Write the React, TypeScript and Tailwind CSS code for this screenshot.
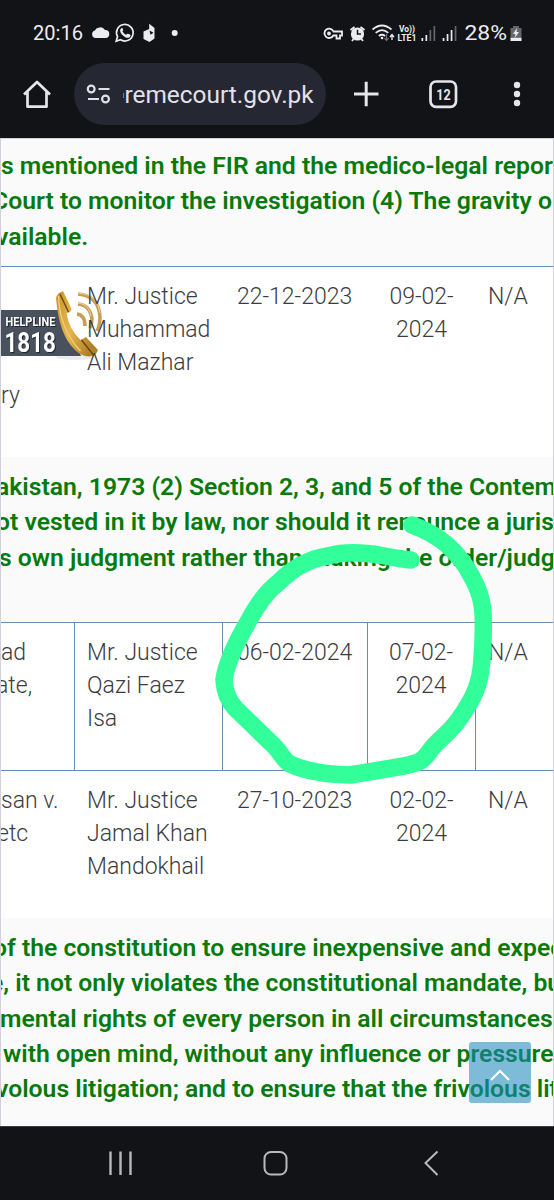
import type { ReactNode } from 'react';

type Line = { text: string; shift: string };

function Summary({ lines, className }: { lines: Line[]; className: string }) {
  return (
    <div className={`overflow-hidden whitespace-pre bg-[#fbfafb] text-[24.73px] leading-[35.25px] font-semibold text-[#087a0c] ${className}`}>
      {lines.map((l) => (
        <div key={l.text} className={l.shift}>{l.text}</div>
      ))}
    </div>
  );
}

type RowProps = {
  party: ReactNode;
  judge: ReactNode;
  heard: string;
  uploaded: ReactNode;
  className: string;
  cell?: string;
};

function Row({ party, judge, heard, uploaded, className, cell = '' }: RowProps) {
  return (
    <div className={`grid grid-cols-[75px_148px_145px_108px_78px] whitespace-pre text-[23px] leading-[33px] font-light text-[#3c3c3e] ${className}`}>
      <div className={`overflow-hidden pt-[13px] ${cell}`}>{party}</div>
      <div className={`pt-[13px] pl-[12px] ${cell}`}>{judge}</div>
      <div className={`pt-[13px] pl-[14px] ${cell}`}>{heard}</div>
      <div className={`pt-[13px] pr-px text-center ${cell}`}>{uploaded}</div>
      <div className="pt-[13px] pl-[12px]">N/A</div>
    </div>
  );
}

function StatusBar() {
  return (
    <svg className="block h-[63px] w-full" viewBox="0 0 554 63" fill="#ececf0" fontFamily="Roboto, sans-serif">
      <text x="33" y="40" fontSize="21" textLength="50" lengthAdjust="spacingAndGlyphs">20:16</text>
      <path d="M95.500 38a3.900 3.900 0 0 1-.6-7.600 5 5 0 0 1 3.600-2.600 5.500 5.500 0 0 1 6.500 2.200 4 4 0 0 1 .5 8z" />
      <path d="M116.200 41.200l1.300-4.600a8.300 8.300 0 1 1 3 3.200z" fill="none" stroke="#ececf0" strokeWidth="1.700" />
      <path d="M121.500 28.300c-2.300 1.300-1.500 4.300 1.200 6.900 2.800 2.700 5.900 3.700 7.500 1.200.6-1.100.4-1.400-.3-1.800l-1.900-.9c-.5-.2-.8 0-1.700 1.100-1.900-.7-3.100-1.900-3.900-3.500.8-.9.900-1.200.7-1.700l-.9-1.800z" />
      <path d="M149.200 23.700l5.300 4.300v10.500l-5 3.500-6-3v-7.500l5.700-2.500z" />
      <path d="M149.500 30.500l4 2.300-3 2z" fill="#121317" />
      <circle cx="174.700" cy="33" r="3" />
      <g fill="none" stroke="#ececf0" strokeWidth="1.800">
        <path d="M333.500 31.500h8.500v4h-2v3h-3.500v-3h-3.200a4.700 4.700 0 1 1 .2-4z" />
        <circle cx="329" cy="33.500" r="1" />
      </g>
      <circle cx="357.500" cy="34" r="6.600" />
      <path d="M350.500 30l4-3M364.500 30l-4-3M353.500 39l-1.500 2M361.500 39l1.500 2" stroke="#ececf0" strokeWidth="1.800" />
      <path d="M357.500 29.800v4.300h3.500" fill="none" stroke="#121317" strokeWidth="1.500" />
      <g fill="none" stroke="#ececf0" strokeWidth="1.700">
        <path d="M372.500 29.500q9.500-8 19 0M375.700 32.800q6.300-5.500 12.600 0M378.900 36q3-2.500 6.200 0" />
        <path d="M386.500 34v6m-2-2l2 2.500 2-2.500" stroke="#707178" strokeWidth="1.200" />
        <path d="M392 40v-5m-2 2l2-2.500 2 2.500" strokeWidth="1.300" />
      </g>
      <circle cx="382" cy="38" r="1.300" />
      <text x="399" y="32" fontSize="9" fontWeight="700" textLength="16" lengthAdjust="spacingAndGlyphs">Vo))</text>
      <text x="397.500" y="41" fontSize="9.500" fontWeight="700" textLength="19" lengthAdjust="spacingAndGlyphs">LTE1</text>
      <path d="M421.500 38h1.700v3h-1.700zM425.500 35h1.700v6h-1.700zM442.700 38h1.700v3h-1.700zM446.700 34h1.700v7h-1.700zM450.700 30h1.700v11h-1.700z" />
      <path d="M429.500 30h1.700v11h-1.700zM433.500 26h1.700v15h-1.700zM454.700 26h1.700v15h-1.700z" fill="#65666c" />
      <text x="464.500" y="40" fontSize="21" textLength="42.500" lengthAdjust="spacingAndGlyphs">28%</text>
      <path d="M513 26h6v2h2.500v9h-11v-9h2.500z" fill="#65666c" />
      <path d="M510.500 37.500h11v3.500h-11z" />
      <path d="M517 28l-4 6h2.500l-.8 4 4.300-6h-2.500z" />
    </svg>
  );
}

function Toolbar() {
  return (
    <div className="flex h-[75px] items-start">
      <svg className="h-[62px] w-[74px]" viewBox="0 0 74 62" fill="none" stroke="#e6e5ea" strokeWidth="2.700">
        <path d="M24 31.500L37 19l13 12.500M27.500 29v14.700h19V29" strokeLinejoin="round" />
      </svg>
      <div className="flex h-[62px] w-[252px] items-center overflow-hidden rounded-full bg-[#252732]">
        <svg className="ml-[12px] h-[22px] w-[26px] shrink-0" viewBox="0 0 26 22" fill="none" stroke="#e0dfe8" strokeWidth="2.200">
          <circle cx="5.200" cy="6" r="3.400" /><path d="M12.500 6h11M2 16h11" /><circle cx="19.500" cy="16" r="3.400" />
        </svg>
        <div className="mt-[3px] ml-[11px] h-[5px] w-px bg-[#777984]" />
        <div className="ml-[0.5px] pt-[2px] text-[24.4px] text-[#e3e1ea]">remecourt.gov.pk</div>
      </div>
      <svg className="h-[62px] w-[228px]" viewBox="0 0 228 62" fill="none" stroke="#e6e5ea" strokeWidth="3">
        <path d="M28 31h24.500M40.200 18.700v24.500" />
        <rect x="104.500" y="18.500" width="25.500" height="25.300" rx="5.500" strokeWidth="2.700" />
        <text x="110.300" y="36.500" fontSize="15.500" fontWeight="700" textLength="14.500" lengthAdjust="spacingAndGlyphs" stroke="none" fill="#e6e5ea" fontFamily="Roboto, sans-serif">12</text>
        <g fill="#e6e5ea" stroke="none"><circle cx="191" cy="22" r="3.200" /><circle cx="191" cy="31" r="3.200" /><circle cx="191" cy="40" r="3.200" /></g>
      </svg>
    </div>
  );
}

function Helpline() {
  return (
    <svg className="absolute top-[147px] left-0 h-[80px] w-[106px]" viewBox="0 285 106 80">
      <defs>
        <linearGradient id="gold" x1="0" y1="0" x2="1" y2="0.500">
          <stop offset="0" stopColor="#c99428" /><stop offset="0.500" stopColor="#e6b751" /><stop offset="1" stopColor="#b08226" />
        </linearGradient>
      </defs>
      <ellipse cx="76" cy="357" rx="20" ry="3" fill="#ececed" />
      <path d="M0 310h61l20 46H0z" fill="#49515f" />
      <g className="drop-shadow-[1px_1px_0_#20252e]" fill="#fff" fontFamily="Roboto, sans-serif" fontWeight="700">
        <text x="5.500" y="325.700" fontSize="13.500" textLength="50" lengthAdjust="spacingAndGlyphs">HELPLINE</text>
        <text x="4.500" y="351.500" fontSize="27.500" textLength="51.500" lengthAdjust="spacingAndGlyphs">1818</text>
      </g>
      <path d="M56 298Q57 293 63 291L71.500 309Q71 313 66.500 313Q69 329 80.500 340L86 337L98 350Q96 356 89 356.500Q81 356 75 350Q59 335 56 298Z" fill="url(#gold)" />
      <path d="M60 294l8.500 18M81.500 340l12 15" stroke="#684811" strokeWidth="1.400" fill="none" />
      <path d="M58.500 296q1 33 22 55" stroke="#f2cf7c" strokeWidth="1.300" fill="none" />
      <g fill="none" stroke="#c69d52" strokeWidth="3.500">
        <path d="M78 294q21 2 22 23 0 8-3 14M78 304q12 1 14 15 0 4-2 9M77 314q8 1 8 12" />
      </g>
      <path d="M78 293q20 1 22 20M78 303q11 1 13 13" fill="none" stroke="#ecd7a5" strokeWidth="1" />
    </svg>
  );
}

export default function App() {
  return (
    <div className="h-[1200px] w-[554px] overflow-hidden bg-[#121317] font-['Roboto',sans-serif]">
      <StatusBar />
      <Toolbar />
      <main className="relative h-[988px] overflow-hidden bg-white">
        <Helpline />
        <Summary
          className="h-[129px] border-b border-[#6c8cae] pt-[10px]"
          lines={[
            { text: 's mentioned in the FIR and the medico-legal repor', shift: 'ml-px' },
            { text: 'Court to monitor the investigation (4) The gravity o', shift: '-ml-[8px]' },
            { text: 'vailable.', shift: '-ml-[4px]' },
          ]}
        />
        <Row
          className="relative h-[190px]"
          party={<div className="pt-[99px] pl-px">ry</div>}
          judge={<>Mr. Justice<br />Muhammad<br />Ali Mazhar</>}
          heard="22-12-2023"
          uploaded={<>09-02-<br />2024</>}
        />
        <Summary
          className="h-[166px] border-b border-[#6c8cae] pt-[12px]"
          lines={[
            { text: 'akistan, 1973 (2) Section 2, 3, and 5 of the Contem', shift: '-ml-[4px]' },
            { text: 'ot vested in it by law, nor should it renounce a juris', shift: '-ml-[4px]' },
            { text: 's own judgment rather than making the order/judg', shift: '-ml-px' },
          ]}
        />
        <Row
          className="h-[148px] border-b border-[#6c8cae]"
          cell="border-r border-[#6c8cae]"
          party={<><div className="pl-px">ad</div><div className="-ml-[4px]">ate,</div></>}
          judge={<>Mr. Justice<br />Qazi Faez<br />Isa</>}
          heard="06-02-2024"
          uploaded={<>07-02-<br />2024</>}
        />
        <Row
          className="h-[147px]"
          party={<><div className="pl-px">san v.</div><div className="-ml-[3px]">etc</div></>}
          judge={<>Mr. Justice<br />Jamal Khan<br />Mandokhail</>}
          heard="27-10-2023"
          uploaded={<>02-02-<br />2024</>}
        />
        <Summary
          className="h-[208px] pt-[12px]"
          lines={[
            { text: 'of the constitution to ensure inexpensive and expec', shift: '-ml-[7px]' },
            { text: 'e, it not only violates the constitutional mandate, bu', shift: '-ml-[10px]' },
            { text: 'mental rights of every person in all circumstances', shift: 'ml-0' },
            { text: 'with open mind, without any influence or pressure', shift: 'ml-[3px]' },
            { text: 'volous litigation; and to ensure that the frivolous lit', shift: '-ml-[4px]' },
          ]}
        />
        <div className="absolute inset-0 border-x border-t border-[#d2d1d9]" />
        <svg className="absolute top-[372px] left-[200px] h-[280px] w-[300px]" viewBox="200 510 300 280" fill="none" stroke="#33ff9a" strokeWidth="17.500" strokeLinecap="round" strokeLinejoin="round">
          <path d="M412 525C437 534 458 549 473 579C484 599 484 614 483 641C482 670 480 685 470 702Q457 725 443 737Q434 745 429 752C422 763 416 763 404 766L350 775Q312 774 290 764C282 759 280 750 270 742L235 708Q225 697 224 680Q227 658 248 622Q262 595 279 582Q301 560 328 556Q350 550 382 555.500Q400 559 411 560" />
        </svg>
        <button aria-label="Back to top" className="absolute top-[904px] left-[469px] flex h-[61px] w-[62px] items-center justify-center rounded-[3px] bg-[#1586bd]/55 pt-1">
          <svg className="h-[14px] w-[22px]" viewBox="0 0 22 14" fill="none" stroke="#fff" strokeWidth="2"><path d="M2 12l9-9 9 9" /></svg>
        </button>
      </main>
      <svg className="block h-[74px] w-full" viewBox="0 0 554 74" fill="none" stroke="#b8b8bd" strokeWidth="2">
        <path d="M0 .5h554" stroke="#3a3d49" strokeWidth="1" />
        <path d="M110.500 25.500V49M120.500 25.500V49M130.500 25.500V49" strokeWidth="2.400" />
        <rect x="264.500" y="26" width="22" height="22.500" rx="6.500" />
        <path d="M437.500 25.500L425.500 37l12 12" />
      </svg>
    </div>
  );
}
